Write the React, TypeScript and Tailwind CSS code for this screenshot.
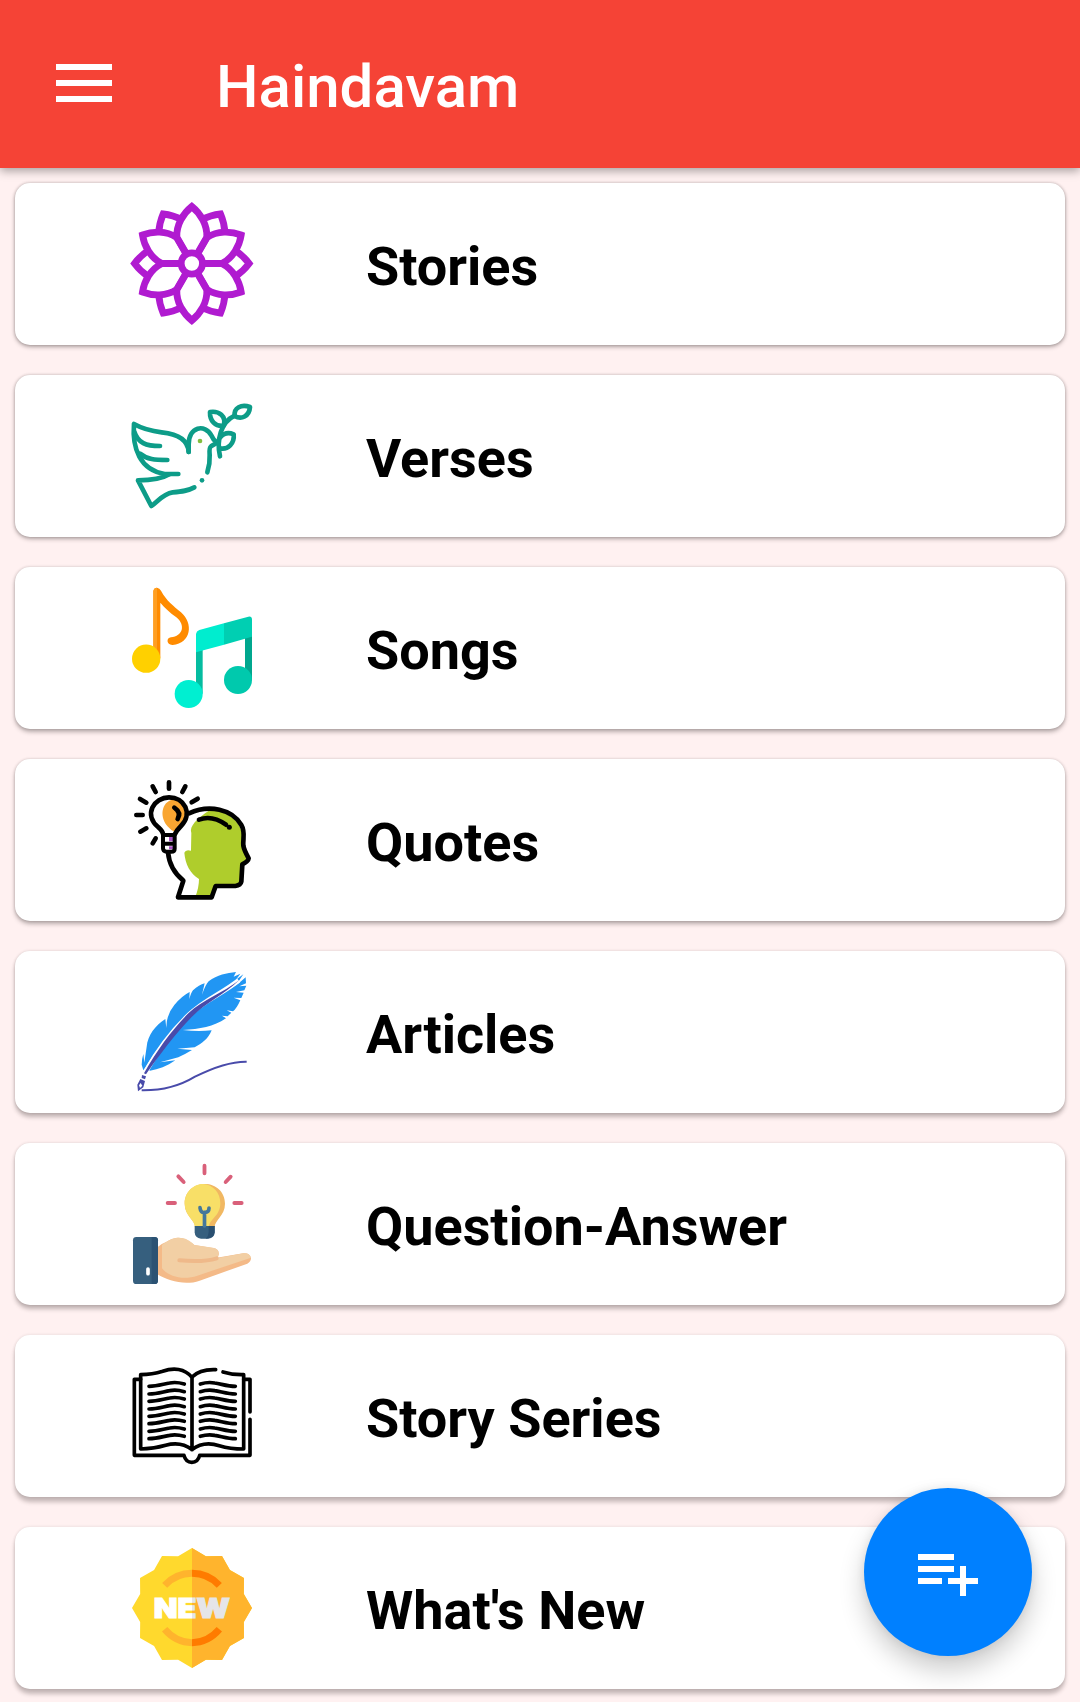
import type { ReactNode } from "react"

type IconProps = { viewBox: string; children: ReactNode }

function Icon({ viewBox, children }: IconProps) {
  return (
    <svg viewBox={viewBox} className="-mt-0.5 h-[120px] w-[120px] shrink-0 overflow-visible" fill="none">
      {children}
    </svg>
  )
}

function FlowerIcon() {
  return (
    <Icon viewBox="36 39 360 360">
      <g transform="translate(215.5 220.5)" stroke="#b01bd0" strokeWidth="20.500">
        <circle r="32" />
        {[0, 60, 120, 180, 240, 300].map((angle) => (
          <g key={angle} transform={`rotate(${angle})`}>
            <path d="M19 -34 L45 -79 C47 -116 26 -150 0 -171 C-26 -150 -47 -116 -45 -79 L-19 -34" />
            <path d="M128 -41 Q154 -24 172 0 Q154 24 128 41" />
          </g>
        ))}
      </g>
    </Icon>
  )
}

function DoveIcon() {
  return (
    <Icon viewBox="36 30 360 360">
      <g stroke="#0d9c88" strokeWidth="14" strokeLinecap="round" strokeLinejoin="round">
        <path d="M206 201 C204 160 165 146 125 142 C91 138 65 130 42 117 C36 190 60 255 134 267 H175" />
        <path d="M43 140 C54 174 78 183 120 183" />
        <path d="M60 206 C82 224 104 225 142 225" />
        <path d="M148 268 C125 282 92 286 54 286 L94 363 C112 352 128 326 158 322 C188 320 202 318 223 307" />
        <path d="M206 201 V178 C206 124 255 116 274 151 Q279 164 291 173 L273 184 Q267 188 269 210 C270 230 268 244 262 262" />
        <path d="M300 214 C289 165 302 112 344 92" />
        <path d="M344 93 C341 68 364 57 390 66 C388 94 364 105 344 93 Z" />
        <path d="M311 122 C286 125 269 108 270 81 C297 77 320 94 311 122 Z" />
        <path d="M301 157 C312 144 327 142 341 148 C344 176 324 194 301 190" />
      </g>
      <circle cx="246" cy="286" r="7" fill="#0d9c88" />
      <circle cx="240" cy="168" r="7" fill="#83bd3d" />
    </Icon>
  )
}

function MusicIcon() {
  return (
    <Icon viewBox="36 36 360 360">
      <path d="M100 48 Q102 38 111 38 Q119 39 123 47 C140 78 160 92 183 112 C221 145 214 205 158 210 C139 211 138 188 153 187 C188 184 198 151 169 127 C148 111 134 99 121 83 V250 H100 Z" fill="#ff8b00" />
      <path d="M100 48 Q102 38 111 38 V250 H100 Z" fill="#ff9f22" />
      <circle cx="78.500" cy="251" r="42.500" fill="#ffd000" />
      <path d="M228 222 H248 V356 H228 Z M375 180 H396 V316 H375 Z" fill="#05bca0" />
      <path d="M228 177 Q229 168 238 165 L312 145 V209 L228 232 Z" fill="#00edcf" />
      <path d="M312 145 L385 125 Q396 123 396 134 V185 L312 209 Z" fill="#00cfb2" />
      <path d="M375 191 L396 185 V316 H375 Z" fill="#00a78e" />
      <circle cx="206" cy="357" r="42" fill="#00efd1" />
      <circle cx="354" cy="315" r="42" fill="#00c9ad" />
    </Icon>
  )
}

function ThinkIcon() {
  return (
    <Icon viewBox="36 33 360 360">
      <path d="M269 127 C230 152 207 176 214 195 L213 248 Q197 243 193 254 C196 290 210 315 237 333 Q237 358 226 387 H274 L286 355 H349 Q365 352 364 335 L368 285 L386 271 L370 234 Q371 185 348 160 C325 135 300 128 269 127 Z" fill="#afcd2c" />
      <path d="M160 94 C121 103 119 151 144 176 Q153 187 165 192 C182 168 198 163 198 139 C196 112 180 98 160 94 Z" fill="#f9a632" />
      <path d="M147 207 H164 V220 H147 Z M147 235 H164 V244 H147 Z" fill="#a653c4" />
      <g stroke="#000" strokeWidth="14" strokeLinecap="round" strokeLinejoin="round">
        <path d="M207 136 C268 108 337 124 364 171 C377 193 368 213 370 233 Q372 246 386 271 Q385 280 367 289 L364 341 Q362 352 346 354 H287 L275 388 H174 L190 338 C159 313 147 286 144 253" />
        <path d="M129 198 Q128 190 115 178 C69 139 103 88 147 88 C193 88 220 137 183 174 Q170 187 165 198" />
        <path d="M129 201 H164 V242 Q164 251 154 251 H139 Q129 250 129 241 Z M131 227 H161" strokeWidth="12" />
        <path d="M237 155 Q276 140 318 170" />
        <path d="M163 119 Q185 134 173 153" />
        <path d="M147 43 V62 M98 55 L107 72 M60 93 L79 104 M49 141 H68 M61 191 L79 181 M107 211 L98 226 M196 55 L187 72 M233 92 L215 103" />
      </g>
      <circle cx="328" cy="178" r="7.500" fill="#000" />
    </Icon>
  )
}

function FeatherIcon() {
  return (
    <Icon viewBox="36 33 360 360">
      <path d="M70 331 L65 314 Q65 298 70 282 L73 308 L80 260 C83 226 107 195 136 177 L139 205 Q138 165 163 135 Q185 108 209 96 L208 117 Q214 96 219 91 Q237 75 254 70 L246 104 Q257 73 266 64 C292 44 320 39 348 36 L341 50 L361 41 L348 59 L370 43 L354 67 C300 94 250 119 205 163 C149 215 108 269 76 324 Z" fill="#2196f3" />
      <path d="M90 332 L80 326 C113 271 153 217 202 165 C249 124 309 101 357 69 L377 52 L378 70 L358 79 L379 77 L373 91 L348 96 L371 98 L364 114 L341 113 L361 121 Q350 146 339 154 L320 151 L334 158 L323 169 L306 167 L318 175 C280 201 240 207 188 210 Q235 216 275 211 C265 237 245 250 224 262 L172 266 L216 270 Q193 284 175 292 L120 307 L166 301 C141 319 115 328 90 332 Z" fill="#2196f3" />
      <path d="M76 336 C116 267 157 212 208 164 C252 121 309 99 356 61" stroke="#fff" strokeWidth="15" />
      <path d="M72 340 C112 268 157 209 205 160 C250 117 309 99 358 60 C312 104 256 129 215 171 C166 222 119 283 78 343 Z" fill="#494baa" />
      <path d="M66 345 L78 349 L75 358 L65 354 Z" fill="#494baa" />
      <path fillRule="evenodd" d="M61 357 L75 363 L70 382 L54 394 L52 374 Z M62 369 L57 376 L60 384 L67 377 Z" fill="#494baa" />
      <path d="M65 391 C126 392 174 381 225 350 C279 323 328 304 380 305" stroke="#494baa" strokeWidth="6" />
    </Icon>
  )
}

function IdeaHandIcon() {
  return (
    <Icon viewBox="36 33 360 360">
      <path d="M112 286 Q127 273 140 269 C169 250 194 254 223 279 L278 288 Q299 290 296 309 L290 317 L370 304 Q389 302 393 319 Q393 329 382 335 L239 386 C194 402 145 386 112 367 Z" fill="#f4ba88" />
      <path d="M126 279 C165 247 199 254 223 279 L279 287 Q297 290 296 307 L294 318 L370 304 Q388 301 393 317 L232 371 C189 386 145 373 126 349 Z" fill="#f2cfa4" />
      <path d="M178 325 C213 328 253 331 290 319" stroke="#efb98a" strokeWidth="12" strokeLinecap="round" />
      <rect x="39" y="255" width="75" height="141" rx="10" fill="#365f7e" />
      <path d="M95 255 H104 Q114 255 114 266 V386 Q113 396 103 396 H95 Z" fill="#2b5273" />
      <path d="M84 351 V365" stroke="#fff" strokeWidth="11" strokeLinecap="round" />
      <path d="M225 225 C225 203 194 192 194 155 C194 117 223 96 255 96 C288 96 315 120 315 155 C315 191 284 204 284 225 Z" fill="#f1b862" />
      <path d="M225 225 C225 203 194 192 194 155 C194 117 223 96 249 96 C280 98 301 123 301 154 C301 193 267 202 267 225 Z" fill="#f8df67" />
      <path d="M224 222 H284 V241 Q283 259 265 260 H243 Q225 259 224 241 Z" fill="#365f7e" />
      <path d="M266 222 H284 V241 Q283 259 257 260 Q266 251 266 239 Z" fill="#294f70" />
      <path d="M253.500 222 V185 M240 167 Q242 184 254 181 Q267 182 267 168" stroke="#45789b" strokeWidth="11" strokeLinecap="round" />
      <path d="M253.500 41 V64 M175 73 L191 90 M332 74 L317 90 M143 153 H165 M343 153 H365" stroke="#d9607a" strokeWidth="11.500" strokeLinecap="round" />
    </Icon>
  )
}

const bookLines = [125, 148, 170, 193, 215, 237, 260, 282]

function BookIcon() {
  return (
    <Icon viewBox="36 33 360 360">
      <g stroke="#000" strokeWidth="11" strokeLinecap="round" strokeLinejoin="round">
        <path d="M62 106 H43 V334 H192 C199 362 232 362 239 334 H390 V226 M390 204 V106 H371" />
        <path d="M216 317 V100 C194 73 160 70 128 82 C103 90 85 92 62 92 V315 C92 315 113 311 137 304 C169 295 195 301 216 317 C239 299 266 295 298 305 C324 313 343 315 371 315 V92 Q337 93 309 84" />
        <path d="M216 99 Q240 75 287 77" />
        {bookLines.map((y) => (
          <g key={y} transform={`translate(0 ${y})`}>
            <path d="M87 2 C112 2 130 -5 149 -8 Q169 -12 193 -5" />
            <path d="M241 -5 Q264 -12 284 -8 C304 -5 323 2 346 2" />
          </g>
        ))}
      </g>
    </Icon>
  )
}

// 12 tips, notches halfway between them
const badgePoints = Array.from({ length: 24 }, (_, i) => {
  const r = i % 2 === 0 ? 180 : 161
  const a = (i * Math.PI) / 12
  return [216 + r * Math.sin(a), 216 - r * Math.cos(a)]
})
const toPoints = (points: number[][]) => points.map((p) => p.map((n) => n.toFixed(1)).join(",")).join(" ")

function NewIcon() {
  return (
    <Icon viewBox="36 33 360 360">
      <defs>
        <linearGradient id="new-text" gradientUnits="userSpaceOnUse" x1="106" y1="0" x2="326" y2="0">
          <stop offset="0.5" stopColor="#fff" />
          <stop offset="0.5" stopColor="#e5e5e8" />
        </linearGradient>
      </defs>
      <polygon points={toPoints(badgePoints)} fill="#ffd92d" />
      <polygon points={toPoints(badgePoints.slice(0, 13))} fill="#ffb42d" />
      <g strokeWidth="21">
        <path d="M134 148 Q168 112 216 112 M134 280 Q168 320 216 320" stroke="#ffb42d" />
        <path d="M216 112 Q264 112 298 148 M216 320 Q264 320 298 280" stroke="#ff7b00" />
      </g>
      <text
        x="101"
        y="246"
        textLength="229"
        lengthAdjust="spacingAndGlyphs"
        fill="url(#new-text)"
        stroke="url(#new-text)"
        strokeWidth="3"
        className="font-['Inter',sans-serif] text-[81px] font-black"
      >
        NEW
      </text>
    </Icon>
  )
}

const items = [
  { label: "Stories", icon: <FlowerIcon />, shadow: "shadow-[0_2px_4px_rgba(50,40,40,0.36),0_0_3px_rgba(50,40,40,0.26)]" },
  { label: "Verses", icon: <DoveIcon />, shadow: "shadow-[0_2px_4px_rgba(50,40,40,0.36),0_0_3px_rgba(50,40,40,0.24)]" },
  { label: "Songs", icon: <MusicIcon />, shadow: "shadow-[0_3px_4px_rgba(50,40,40,0.34),0_0_3px_rgba(50,40,40,0.22)]" },
  { label: "Quotes", icon: <ThinkIcon />, shadow: "shadow-[0_3px_4px_rgba(50,40,40,0.34),0_0_3px_rgba(50,40,40,0.2)]" },
  { label: "Articles", icon: <FeatherIcon />, shadow: "shadow-[0_4px_4px_rgba(50,40,40,0.3),0_0_3px_rgba(50,40,40,0.18)]" },
  { label: "Question-Answer", icon: <IdeaHandIcon />, shadow: "shadow-[0_4px_4px_rgba(50,40,40,0.3),0_0_3px_rgba(50,40,40,0.16)]" },
  { label: "Story Series", icon: <BookIcon />, shadow: "shadow-[0_5px_4px_rgba(50,40,40,0.28),0_0_3px_rgba(50,40,40,0.14)]" },
  { label: "What's New", icon: <NewIcon />, shadow: "shadow-[0_5px_4px_rgba(50,40,40,0.28),0_0_3px_rgba(50,40,40,0.14)]" },
]

export default function App() {
  return (
    <div className="h-[1702px] w-[1080px] overflow-hidden bg-[#fff1f1] font-['Roboto',sans-serif]">
      <header className="relative flex h-[168px] items-center bg-[#f54336] pl-14 shadow-[0_3px_9px_rgba(0,0,0,0.34)]">
        <button aria-label="Menu" className="-mt-0.5 flex w-14 flex-col gap-2.5">
          <span className="h-1.5 bg-white" />
          <span className="h-1.5 bg-white" />
          <span className="h-1.5 bg-white" />
        </button>
        <h1 className="ml-[104px] pt-1.5 text-[60px] leading-none font-medium text-white">Haindavam</h1>
      </header>

      <main className="flex flex-col gap-[30px] px-[15px] pt-[15px]">
        {items.map((item) => (
          <button
            key={item.label}
            className={`flex h-[162px] w-full shrink-0 items-center rounded-[15px] bg-white pl-[117px] text-left ${item.shadow}`}
          >
            {item.icon}
            <span className="ml-[114px] pt-[5px] text-[54px] leading-none font-bold text-black">{item.label}</span>
          </button>
        ))}
      </main>

      {/* Floating add button */}
      <button
        aria-label="Add to list"
        className="absolute top-[1488px] left-[864px] flex h-[168px] w-[168px] items-center justify-center rounded-full bg-[#0080ff] shadow-[0_14px_26px_rgba(0,0,0,0.2),0_0_10px_rgba(0,0,0,0.08)]"
      >
        <svg viewBox="0 0 24 24" className="h-[72px] w-[72px]" fill="#fff">
          <path d="M14 10H2v2h12v-2zm0-4H2v2h12V6zm4 8v-4h-2v4h-4v2h4v4h2v-4h4v-2h-4zM2 16h8v-2H2v2z" />
        </svg>
      </button>
    </div>
  )
}
